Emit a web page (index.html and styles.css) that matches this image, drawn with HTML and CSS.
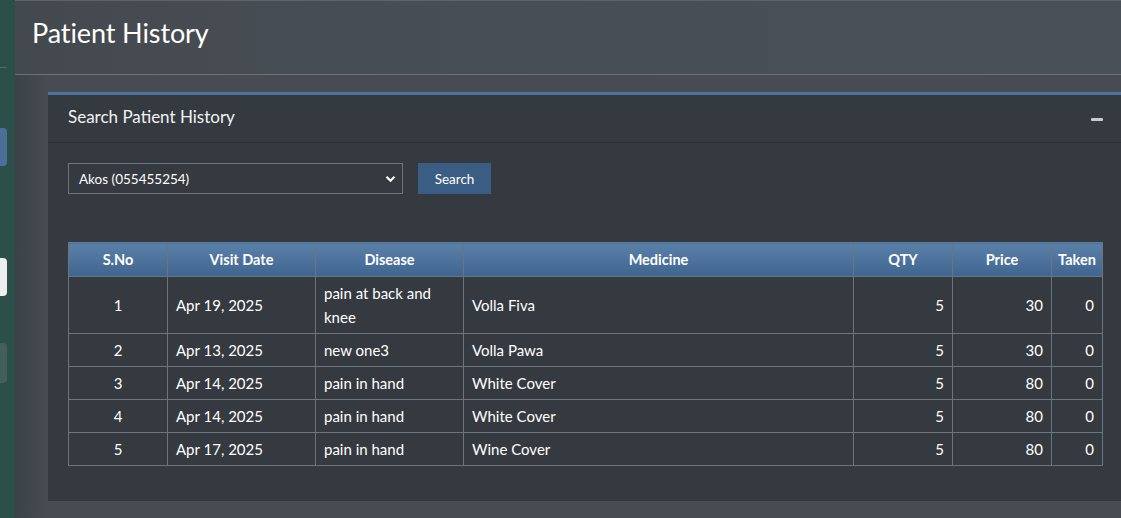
FILE: index.html
```html
<!DOCTYPE html>
<html>
<head>
<meta charset="utf-8">
<link rel="stylesheet" href="styles.css">
</head>
<body>
<div class="layout">
  <aside class="sidebar">
    <div class="brand-line"></div>
    <div class="side-item side-blue"></div>
    <div class="side-item side-white"></div>
    <div class="side-item side-gray"></div>
  </aside>
  <main class="main">
    <header class="content-header">
      <h1>Patient History</h1>
    </header>
    <section class="content">
      <div class="card">
        <div class="card-header">
          <h3 class="card-title">Search Patient History</h3>
          <span class="minus"></span>
        </div>
        <div class="card-body">
          <form class="search-form">
            <div class="select">
              <span>Akos (055455254)</span>
              <svg class="chev" width="11" height="8" viewBox="0 0 11 8"><path d="M1.5 1.8 L5.5 5.8 L9.5 1.8" fill="none" stroke="#fff" stroke-width="2.2"/></svg>
            </div>
            <button type="button" class="btn">Search</button>
          </form>
          <table class="tbl">
            <thead>
              <tr>
                <th class="c-sno">S.No</th>
                <th class="c-date">Visit Date</th>
                <th class="c-dis">Disease</th>
                <th class="c-med">Medicine</th>
                <th class="c-qty">QTY</th>
                <th class="c-price">Price</th>
                <th class="c-taken">Taken</th>
              </tr>
            </thead>
            <tbody>
              <tr><td class="ctr">1</td><td>Apr 19, 2025</td><td>pain at back and knee</td><td>Volla Fiva</td><td class="num">5</td><td class="num">30</td><td class="num">0</td></tr>
              <tr><td class="ctr">2</td><td>Apr 13, 2025</td><td>new one3</td><td>Volla Pawa</td><td class="num">5</td><td class="num">30</td><td class="num">0</td></tr>
              <tr><td class="ctr">3</td><td>Apr 14, 2025</td><td>pain in hand</td><td>White Cover</td><td class="num">5</td><td class="num">80</td><td class="num">0</td></tr>
              <tr><td class="ctr">4</td><td>Apr 14, 2025</td><td>pain in hand</td><td>White Cover</td><td class="num">5</td><td class="num">80</td><td class="num">0</td></tr>
              <tr><td class="ctr">5</td><td>Apr 17, 2025</td><td>pain in hand</td><td>Wine Cover</td><td class="num">5</td><td class="num">80</td><td class="num">0</td></tr>
            </tbody>
          </table>
        </div>
      </div>
    </section>
  </main>
</div>
</body>
</html>
```

FILE: styles.css
```css
* { box-sizing: border-box; }
html, body { margin: 0; padding: 0; }
body {
  width: 1121px;
  height: 518px;
  overflow: hidden;
  font-family: Lato, "Open Sans", sans-serif;
  color: #fff;
  background: #454a51;
}
.layout {
  display: flex;
  height: 518px;
}
.sidebar {
  width: 15px;
  flex: none;
  background: #2d4f4a;
  display: flex;
  flex-direction: column;
}
.brand-line {
  height: 1px;
  width: 7px;
  margin-top: 67px;
  background: #4f6b67;
}
.side-item {
  width: 7px;
  border-radius: 0 4px 4px 0;
}
.side-blue { height: 38px; margin-top: 60px; background: #4b6f99; }
.side-white { height: 38px; margin-top: 92px; background: #eceeef; }
.side-gray { height: 40px; margin-top: 47px; background: #435f5b; }
.main {
  flex: 1;
  min-width: 0;
  background: linear-gradient(90deg, #3d4248 0px, #474c53 33px, #474c53 100%);
}
.content-header {
  height: 75px;
  border-top: 1px solid #5e636a;
  border-bottom: 1px solid #6c7177;
  background: linear-gradient(90deg, #44494f 0px, #474d54 300px, #4a5057 100%);
  padding: 13px 0 0 17px;
}
.content-header h1 {
  margin: 0;
  font-weight: 400;
  font-size: 27px;
  line-height: 38px;
  color: #fff;
  letter-spacing: -0.1px;
}
.content {
  padding: 17px 0 0 33px;
}
.card {
  width: 1074px;
  height: 409px;
  background: #343a40;
  border-top: 3px solid #4b73a0;
}
.card-header {
  height: 48px;
  border-bottom: 1px solid #2c3136;
  display: flex;
  align-items: center;
  justify-content: space-between;
  padding: 0 19px 4px 20px;
}
.card-title {
  margin: 0;
  font-size: 17px;
  font-weight: 400;
  color: #f2f2f2;
}
.minus {
  width: 12px;
  height: 3px;
  margin-top: 6px;
  background: #c8ccd0;
  border-radius: 1px;
}
.card-body {
  padding: 20px 20px 0 20px;
}
.search-form {
  display: flex;
  gap: 15px;
  height: 31px;
}
.select {
  width: 335px;
  height: 31px;
  border: 1px solid #6c757d;
  display: flex;
  align-items: center;
  justify-content: space-between;
  padding: 0 6px 0 10px;
  font-size: 13.5px;
  color: #fff;
}
.chev { display: block; }
.btn {
  width: 73px;
  height: 31px;
  border: none;
  background: #3b5d84;
  color: #fff;
  font-family: inherit;
  font-size: 13.5px;
  padding: 0;
}
.tbl {
  margin-top: 48px;
  width: 1035px;
  border-collapse: collapse;
  font-size: 15px;
}
.tbl th, .tbl td {
  border: 1px solid #6c757d;
  padding: 4px 8px;
  line-height: 24px;
}
.tbl th {
  height: 34px;
  font-weight: 700;
  text-align: center;
  padding: 4px 4px;
  background: linear-gradient(#5b80a8, #3f6590);
  border-top-color: #5b80a8;
  color: #fff;
  font-size: 14.5px;
}
.tbl td {
  height: 33px;
  color: #fff;
}
.c-sno { width: 99px; }
.c-date { width: 148px; }
.c-dis { width: 148px; }
.c-med { width: 390px; }
.c-qty { width: 99px; }
.c-price { width: 99px; }
.c-taken { width: 51px; }
.ctr { text-align: center; }
.num { text-align: right; }
```
